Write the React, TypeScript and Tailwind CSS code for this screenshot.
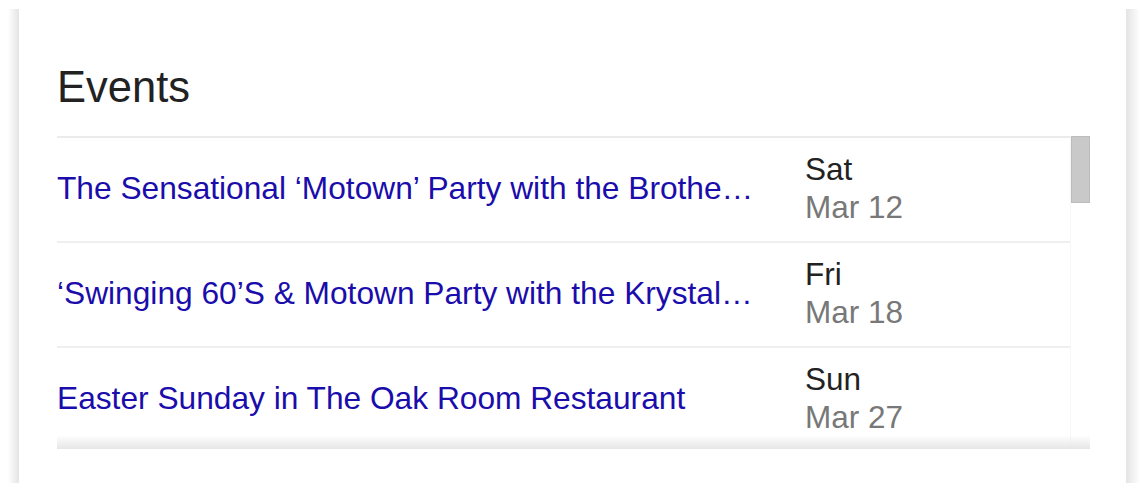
import React from "react";

const events = [
  { title: "The Sensational \u2018Motown\u2019 Party with the Brothers of Soul at The Oak Room", day: "Sat", date: "Mar 12" },
  { title: "\u2018Swinging 60\u2019S & Motown Party with the Krystals\u2019 at The Oak Room", day: "Fri", date: "Mar 18" },
  { title: "Easter Sunday in The Oak Room Restaurant", day: "Sun", date: "Mar 27" },
];

export default function App() {
  return (
    <div
      className="flex w-[1140px] h-[502px] bg-white"
      style={{ fontFamily: '"Liberation Sans", Arial, sans-serif' }}
    >
      <div className="w-[8px] shrink-0" />
      <div className="w-[11px] shrink-0 mt-[9px] h-[474px] bg-gradient-to-r from-white to-[#e4e4e4]" />
      <div className="flex-1 mt-[9px] h-[474px] bg-white pl-[38px] pr-[36px] pt-[57px]">
        <h2 className="text-[43.5px] leading-[43px] text-[#222] font-normal">Events</h2>
        <div className="relative mt-[27px] flex h-[313px] overflow-hidden">
          <div className="w-[1013px] border-t-2 border-[#ebebeb]">
            {events.map((e) => (
              <div
                key={e.day}
                className="flex items-center h-[105px] border-b-2 border-[#efefef] pb-[3px]"
              >
                <a className="block w-[702px] truncate text-[31.7px] leading-[38px] text-[#1a0dab]">
                  {e.title}
                </a>
                <div className="ml-[46px] flex flex-col text-[31.5px] leading-[38px]">
                  <span className="text-[#222]">{e.day}</span>
                  <span className="text-[#787878]">{e.date}</span>
                </div>
              </div>
            ))}
          </div>
          <div className="w-[20px] border-l border-[#f7f7f7]">
            <div className="h-[67px] bg-[#c9c9c9] border border-[#bcbcbc]" />
          </div>
          <div className="absolute left-0 right-0 bottom-0 h-[14px] bg-gradient-to-b from-white/0 to-[#e6e6e6]" />
        </div>
      </div>
      <div className="w-[14px] shrink-0 mt-[9px] h-[474px] bg-gradient-to-r from-[#e4e4e4] to-white" />
    </div>
  );
}
